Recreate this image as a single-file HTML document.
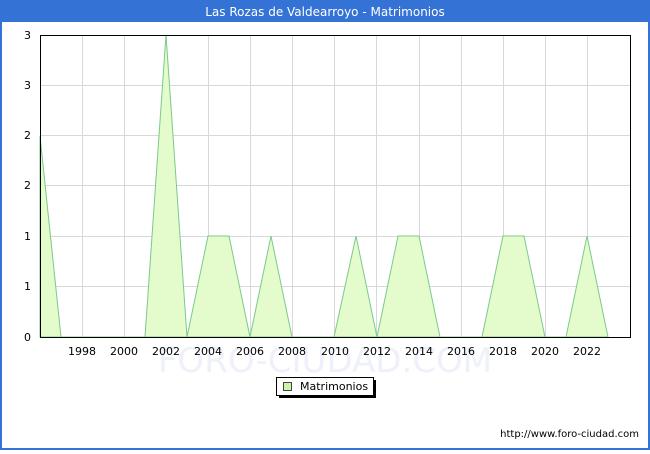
<!DOCTYPE html>
<html><head><meta charset="utf-8"><style>
body{margin:0;width:650px;height:450px;overflow:hidden;background:#fff;font-family:"DejaVu Sans","Liberation Sans",sans-serif}
</style></head><body>
<svg width="650" height="450" xmlns="http://www.w3.org/2000/svg" font-family="DejaVu Sans, Liberation Sans, sans-serif">
<rect x="0" y="0" width="650" height="450" fill="#3473d5"/>
<rect x="2" y="22" width="646" height="426" fill="#fff"/>
<text x="325" y="16" fill="#fff" font-size="12" text-anchor="middle">Las Rozas de Valdearroyo - Matrimonios</text>
<text x="325" y="372" fill="#eef0fa" font-size="34" text-anchor="middle">FORO-CIUDAD.COM</text>
<g stroke="#d8d8d8" stroke-width="1">
<line x1="40" y1="85.5" x2="630" y2="85.5"/><line x1="40" y1="135.5" x2="630" y2="135.5"/><line x1="40" y1="185.5" x2="630" y2="185.5"/><line x1="40" y1="236.5" x2="630" y2="236.5"/><line x1="40" y1="286.5" x2="630" y2="286.5"/>
<line x1="82.5" y1="35" x2="82.5" y2="337"/><line x1="124.5" y1="35" x2="124.5" y2="337"/><line x1="166.5" y1="35" x2="166.5" y2="337"/><line x1="208.5" y1="35" x2="208.5" y2="337"/><line x1="250.5" y1="35" x2="250.5" y2="337"/><line x1="292.5" y1="35" x2="292.5" y2="337"/><line x1="334.5" y1="35" x2="334.5" y2="337"/><line x1="376.5" y1="35" x2="376.5" y2="337"/><line x1="419.5" y1="35" x2="419.5" y2="337"/><line x1="461.5" y1="35" x2="461.5" y2="337"/><line x1="503.5" y1="35" x2="503.5" y2="337"/><line x1="545.5" y1="35" x2="545.5" y2="337"/><line x1="587.5" y1="35" x2="587.5" y2="337"/>
</g>
<polygon fill="#e4fccc" stroke="#7cc88c" stroke-width="1" points="40,136 61,337 145,337 166,35 187,337 208,236 229,236 250,337 271,236 292,337 334,337 356,236 377,337 398,236 419,236 440,337 482,337 503,236 524,236 545,337 566,337 587,236 608,337 40,337"/>
<rect x="40.5" y="35.5" width="590" height="302" fill="none" stroke="#000" stroke-width="1"/>
<g font-size="11" fill="#000" text-anchor="end">
<text x="31" y="39">3</text><text x="31" y="89">3</text><text x="31" y="139">2</text><text x="31" y="189">2</text><text x="31" y="240">1</text><text x="31" y="290">1</text><text x="31" y="341">0</text>
</g>
<g font-size="11" fill="#000" text-anchor="middle">
<text x="82" y="355">1998</text><text x="124" y="355">2000</text><text x="166" y="355">2002</text><text x="208" y="355">2004</text><text x="250" y="355">2006</text><text x="292" y="355">2008</text><text x="335" y="355">2010</text><text x="377" y="355">2012</text><text x="419" y="355">2014</text><text x="461" y="355">2016</text><text x="503" y="355">2018</text><text x="545" y="355">2020</text><text x="587" y="355">2022</text>
</g>
<rect x="279" y="380" width="97" height="18" fill="#000"/>
<rect x="276.5" y="377.5" width="97" height="18" fill="#fff" stroke="#000"/>
<rect x="283.5" y="382.5" width="8" height="8" fill="#ccf5a8" stroke="#444"/>
<text x="300" y="390" font-size="11" fill="#000">Matrimonios</text>
<text x="639" y="437" font-size="10" fill="#000" text-anchor="end">http://www.foro-ciudad.com</text>
</svg>
</body></html>
